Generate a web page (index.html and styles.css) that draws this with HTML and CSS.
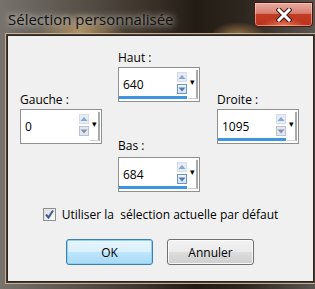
FILE: index.html
```html
<!DOCTYPE html>
<html lang="fr">
<head>
    <meta charset="UTF-8">
    <title>Sélection personnalisée</title>
    <link rel="stylesheet" href="styles.css">
</head>
<body>
    <div class="window">
        <div class="titlebar">
            <span class="title">Sélection personnalisée</span>
            <button class="close" type="button" aria-label="Fermer">
                <svg width="16" height="14" viewBox="0 0 16 14">
                    <path d="M3 2 L13 12 M13 2 L3 12" stroke="#3a1510" stroke-width="5" stroke-linecap="square"/>
                    <path d="M3 2 L13 12 M13 2 L3 12" stroke="#ffffff" stroke-width="3" stroke-linecap="square"/>
                </svg>
            </button>
        </div>
        <div class="client">
            <div class="fields">
                <div class="col col-side">
                    <div class="group">
                        <label class="lbl">Gauche :</label>
                        <div class="spin">
                            <span class="value">0</span>
                            <span class="arrows">
                                <span class="arr up"><svg width="10" height="10" viewBox="0 0 10 10"><path d="M1.5 7 L5 3 L8.5 7 Z" fill="#8aa6cf"/></svg></span>
                                <span class="arr down"><svg width="10" height="10" viewBox="0 0 10 10"><path d="M1.5 3.5 L5 7.5 L8.5 3.5 Z" fill="#8593ad"/></svg></span>
                            </span>
                            <span class="drop">&#9662;</span>
                        </div>
                    </div>
                </div>
                <div class="col col-mid">
                    <div class="group">
                        <label class="lbl">Haut :</label>
                        <div class="spin active">
                            <span class="value">640</span>
                            <span class="arrows">
                                <span class="arr up"><svg width="10" height="10" viewBox="0 0 10 10"><path d="M1.5 7 L5 3 L8.5 7 Z" fill="#8aa6cf"/></svg></span>
                                <span class="arr down hot"><svg width="10" height="10" viewBox="0 0 10 10"><path d="M1.5 3.5 L5 7.5 L8.5 3.5 Z" fill="#5478ad"/></svg></span>
                            </span>
                            <span class="drop">&#9662;</span>
                        </div>
                    </div>
                    <div class="group group-low">
                        <label class="lbl">Bas :</label>
                        <div class="spin active">
                            <span class="value">684</span>
                            <span class="arrows">
                                <span class="arr up"><svg width="10" height="10" viewBox="0 0 10 10"><path d="M1.5 7 L5 3 L8.5 7 Z" fill="#8aa6cf"/></svg></span>
                                <span class="arr down hot"><svg width="10" height="10" viewBox="0 0 10 10"><path d="M1.5 3.5 L5 7.5 L8.5 3.5 Z" fill="#5478ad"/></svg></span>
                            </span>
                            <span class="drop">&#9662;</span>
                        </div>
                    </div>
                </div>
                <div class="col col-side">
                    <div class="group">
                        <label class="lbl">Droite :</label>
                        <div class="spin active">
                            <span class="value">1095</span>
                            <span class="arrows">
                                <span class="arr up"><svg width="10" height="10" viewBox="0 0 10 10"><path d="M1.5 7 L5 3 L8.5 7 Z" fill="#8aa6cf"/></svg></span>
                                <span class="arr down"><svg width="10" height="10" viewBox="0 0 10 10"><path d="M1.5 3.5 L5 7.5 L8.5 3.5 Z" fill="#8593ad"/></svg></span>
                            </span>
                            <span class="drop">&#9662;</span>
                        </div>
                    </div>
                </div>
            </div>

            <label class="check">
                <span class="box">
                    <svg width="11" height="11" viewBox="0 0 11 11"><path d="M2 5.5 L4.5 8.5 L9 1.5" fill="none" stroke="#3d5a96" stroke-width="2"/></svg>
                </span>
                Utiliser la&nbsp; sélection actuelle par défaut
            </label>

            <div class="buttons">
                <button class="btn btn-default" type="button">OK</button>
                <button class="btn" type="button">Annuler</button>
            </div>
        </div>
    </div>
</body>
</html>
```

FILE: styles.css
```css
body {
    margin: 0;
    background: #1b1611;
    font-family: 'Open Sans', 'Liberation Sans', sans-serif;
    font-size: 12px;
    color: #000;
}
.window {
    width: 315px;
    height: 289px;
    box-sizing: border-box;
    padding: 0 1px 7px 7px;
    display: flex;
    flex-direction: column;
    background:
        radial-gradient(ellipse 45px 22px at 80px 34px, rgba(214, 170, 104, 0.75), transparent),
        radial-gradient(ellipse 28px 14px at 238px 36px, rgba(214, 160, 90, 0.7), transparent),
        linear-gradient(90deg, #77726c 0%, #5e5851 20%, #3e352c 45%, #231c15 62%, #2e2720 78%, #5a5550 100%);
}
.titlebar {
    height: 35px;
    display: flex;
    align-items: flex-start;
    flex-shrink: 0;
}
.title {
    font-size: 15px;
    line-height: 20px;
    margin: 9px 0 0 1px;
    color: #111;
    text-shadow: 0 0 6px rgba(230, 225, 215, 0.9), 0 0 10px rgba(230, 225, 215, 0.6);
}
.close {
    margin: 2px 1px 0 auto;
    width: 59px;
    height: 25px;
    padding: 0;
    border: 1px solid #47170f;
    border-radius: 0 0 4px 4px;
    background:
        radial-gradient(ellipse 22px 8px at 50% 100%, rgba(255, 140, 100, 0.8), transparent),
        linear-gradient(#e7aaa0 0%, #d7806f 45%, #c23c26 50%, #b8321c 100%);
    box-shadow: inset 0 0 0 1px rgba(255, 220, 210, 0.5);
    display: flex;
    align-items: center;
    justify-content: center;
}
.client {
    flex: 1;
    background: #f0f0f0;
    border: 1px solid #2a2520;
    box-shadow: 0 0 0 1px #4a3d30, 0 0 0 2px #bfae94;
    display: flex;
    flex-direction: column;
}
.fields {
    display: flex;
    padding: 14px 0 0 12px;
}
.col-side {
    padding-top: 42px;
}
.col:first-child {
    width: 98px;
}
.col-mid {
    width: 99px;
}
.group {
    display: flex;
    flex-direction: column;
}
.group-low {
    margin-top: 36px;
}
.group-low .lbl {
    margin-bottom: 4px;
}
.lbl {
    line-height: 15px;
    margin-bottom: 2px;
}
.spin {
    width: 82px;
    height: 35px;
    box-sizing: border-box;
    border: 1px solid #8e8f8f;
    background: #fff;
    display: flex;
    padding: 2px 0 2px 0;
}
.value {
    flex: 1;
    padding: 7px 0 0 4px;
    line-height: 15px;
    border-bottom: 3px solid transparent;
    margin-bottom: 0;
}
.arrows {
    width: 10px;
    display: flex;
    flex-direction: column;
    padding-top: 2px;
    margin-right: 1px;
    border-bottom: 3px solid transparent;
}
.spin.active .value,
.spin.active .arrows {
    border-bottom-color: #3d95e0;
}
.arr {
    width: 10px;
    height: 10px;
    box-sizing: border-box;
    display: block;
    line-height: 0;
}
.arr.up {
    background: #e6ecf5;
    border: 1px solid #d5dde9;
}
.arr.down {
    margin-top: 2px;
    background: #e3e7ee;
    border: 1px solid #b9c2d2;
}
.arr.hot {
    background: linear-gradient(#eef5fc, #cfe3f6);
    border-color: #6e94c8;
}
.arr svg {
    margin: -1px;
}
.drop {
    width: 8px;
    margin-right: 1px;
    border-right: 2px solid #a9a9a9;
    border-bottom: 1px solid #d0d0d0;
    font-size: 9px;
    line-height: 23px;
    text-align: center;
    color: #000;
}
.check {
    display: flex;
    align-items: center;
    justify-content: center;
    line-height: 15px;
    margin-top: 15px;
    padding-right: 0;
}
.box {
    width: 13px;
    height: 13px;
    box-sizing: border-box;
    border: 1px solid #8e8f8f;
    background: linear-gradient(135deg, #dcdcdc, #fbfbfb);
    margin-right: 6px;
    display: flex;
    align-items: center;
    justify-content: center;
}
.buttons {
    display: flex;
    justify-content: center;
    gap: 14px;
    margin-top: 17px;
    padding-right: 1px;
}
.btn {
    width: 87px;
    height: 26px;
    font-family: inherit;
    font-size: 12px;
    color: #000;
    border: 1px solid #707070;
    border-radius: 3px;
    background: linear-gradient(#f2f2f2 0%, #ebebeb 50%, #dddddd 51%, #cfcfcf 100%);
    box-shadow: inset 0 0 0 1px rgba(255, 255, 255, 0.8);
    padding: 0;
}
.btn-default {
    border-color: #3c7fb1;
    background: linear-gradient(#eaf6fd 0%, #d9f0fc 50%, #bee6fd 51%, #a7d9f5 100%);
    box-shadow: inset 0 0 0 1px #8fd1f5;
}
```
